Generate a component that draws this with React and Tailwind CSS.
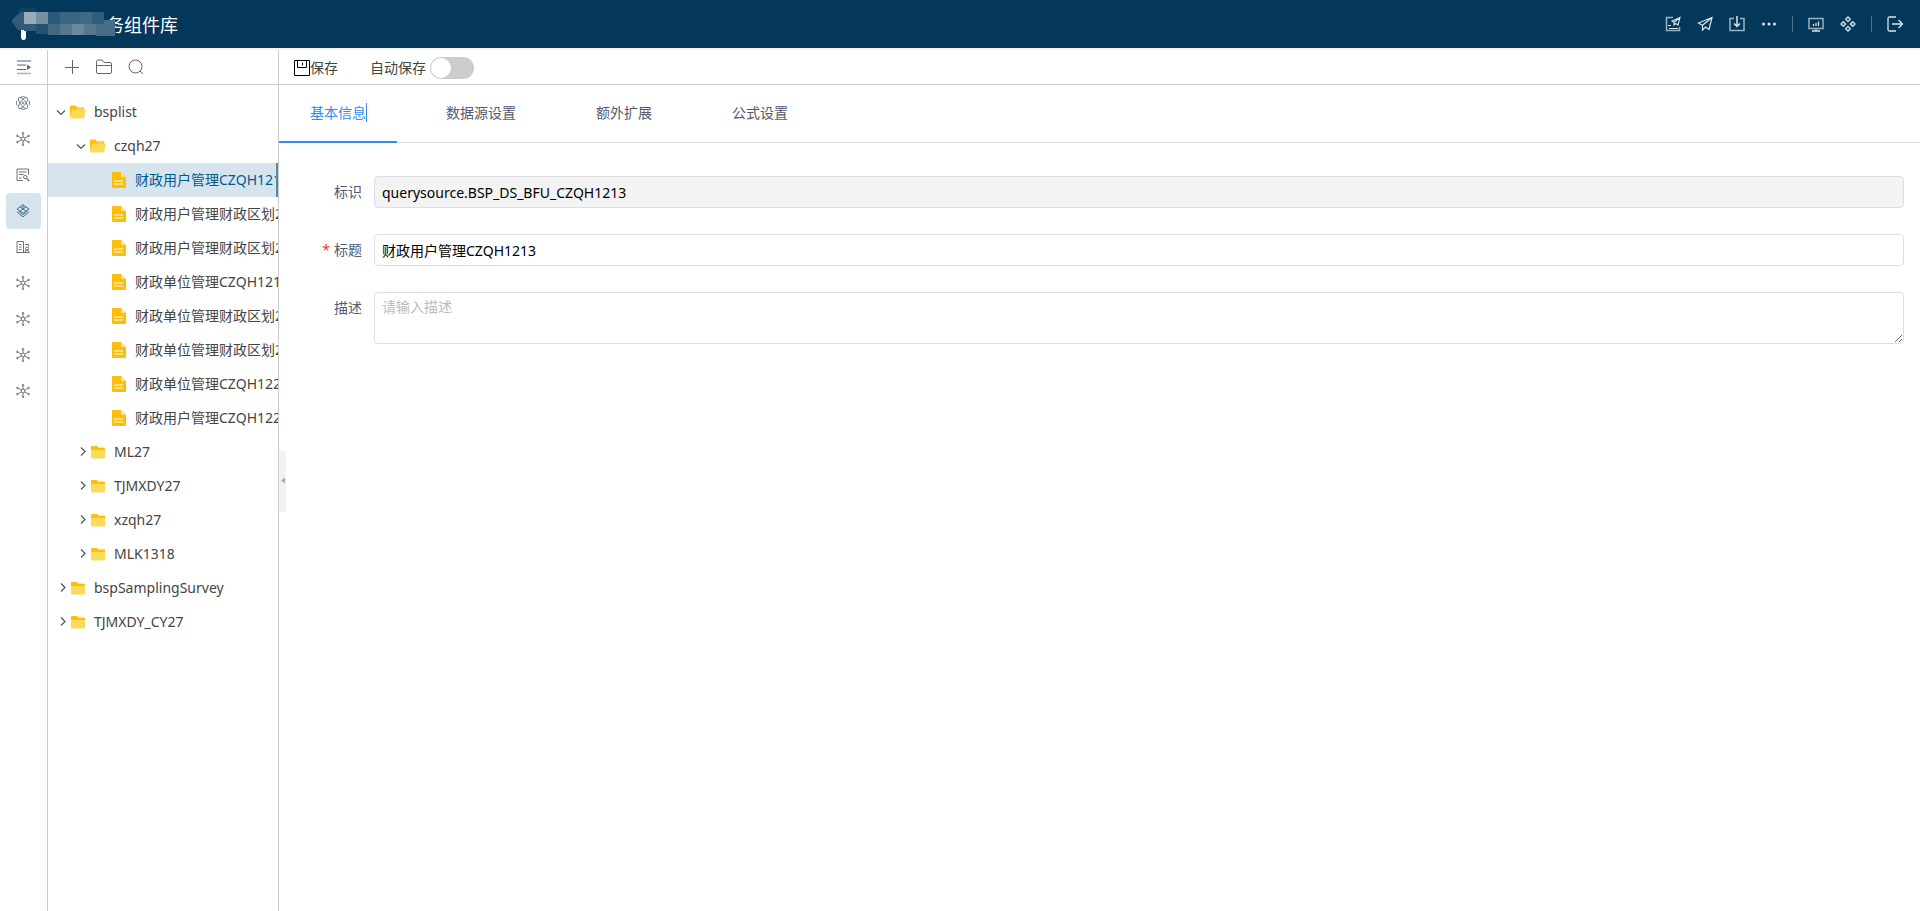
import { useState } from 'react';

const FILES = [
  '财政用户管理CZQH1213',
  '财政用户管理财政区划27',
  '财政用户管理财政区划2701',
  '财政单位管理CZQH1213',
  '财政单位管理财政区划27',
  '财政单位管理财政区划2701',
  '财政单位管理CZQH1227',
  '财政用户管理CZQH1227',
];

const TREE = [
  {
    name: 'bsplist',
    open: true,
    children: [
      { name: 'czqh27', open: true, files: FILES },
      { name: 'ML27' },
      { name: 'TJMXDY27' },
      { name: 'xzqh27' },
      { name: 'MLK1318' },
    ],
  },
  { name: 'bspSamplingSurvey' },
  { name: 'TJMXDY_CY27' },
];

const TABS = ['基本信息', '数据源设置', '额外扩展', '公式设置'];

function Icon({ children, className = 'w-4 h-4', box = '0 0 16 16', width = 1 }) {
  return (
    <svg viewBox={box} className={className} fill="none" stroke="currentColor" strokeWidth={width} aria-hidden="true">
      {children}
    </svg>
  );
}

function HubIcon() {
  return (
    <Icon className="w-[14px] h-[14px]" box="0 0 14 14" width={0.9}>
      <circle cx="7" cy="7" r="1.9" />
      <circle cx="7" cy="1.2" r="0.8" />
      <circle cx="7" cy="12.8" r="0.8" />
      <circle cx="1.4" cy="3.9" r="0.8" />
      <circle cx="12.6" cy="3.9" r="0.8" />
      <circle cx="1.4" cy="10.1" r="0.8" />
      <circle cx="12.6" cy="10.1" r="0.8" />
      <path d="M7 2v3M7 9v3M2.1 4.3l3.2 1.8M11.9 4.3L8.7 6.1M2.1 9.7l3.2-1.8M11.9 9.7L8.7 7.9" />
    </Icon>
  );
}

function AtomIcon() {
  return (
    <Icon className="w-[14px] h-[14px]" box="0 0 14 14" width={0.8}>
      <path d="M4.500 1.200a6.300 6.300 0 0 1 5 0M4.500 12.800a6.300 6.300 0 0 0 5 0M1 4.500a6 6 0 0 0 0 5M13 4.500a6 6 0 0 1 0 5" />
      <ellipse cx="7" cy="7" rx="2.6" ry="6.8" transform="rotate(38 7 7)" />
      <ellipse cx="7" cy="7" rx="2.6" ry="6.8" transform="rotate(-38 7 7)" />
      <circle cx="7" cy="7" r="0.9" />
    </Icon>
  );
}

function FormIcon() {
  return (
    <Icon className="w-[14px] h-[14px]" box="0 0 14 14" width={0.9}>
      <path d="M7 12.5H1V1h11.500v6M3 4h7.500M3 6.500h4.500M3 10h2.500" />
      <circle cx="9.200" cy="9" r="1.700" />
      <path d="M10.500 10.300l2.800 2.800" strokeWidth="1.300" />
    </Icon>
  );
}

function LayersIcon() {
  return (
    <Icon className="w-[14px] h-[14px]" box="0 0 14 14" width={0.9}>
      <path d="M7 .8l6 4.200-6 4.200L1 5z" />
      <path d="M4 2.900l6 4.200M10 2.900L4 7.100M7 .8v4.200" />
      <path d="M.8 7.800L7 12.900l6.200-5.100M2.500 7.200L7 10.800l4.500-3.600" />
    </Icon>
  );
}

function ReportIcon() {
  return (
    <Icon className="w-[14px] h-[14px]" box="0 0 14 14" width={0.9}>
      <path d="M.5 12.500h13M1 12.500v-11h6.500v11M3 4.500h2.500M3 7h2.500M3 9.500h2.500M9 4.500h3.500v2" />
      <circle cx="11" cy="8.500" r="1.500" />
      <path d="M9 12.500q0-2.200 2-2.200t2 2.200" />
    </Icon>
  );
}

const RAIL = [
  ['模型', AtomIcon],
  ['服务', HubIcon],
  ['表单', FormIcon],
  ['数据源', LayersIcon],
  ['报表', ReportIcon],
  ['扩展一', HubIcon],
  ['扩展二', HubIcon],
  ['扩展三', HubIcon],
  ['扩展四', HubIcon],
];

function Chevron({ open }) {
  return (
    <Icon className="w-[10px] h-[10px] shrink-0 text-[#555]" box="0 0 10 10" width={1.2}>
      <path d={open ? 'M1 3.5l4 4 4-4' : 'M5 .5l4 4-4 4'} />
    </Icon>
  );
}

function Folder({ open }) {
  return open ? (
    <svg viewBox="0 0 16 14" className="w-4 h-[14px] shrink-0" aria-hidden="true">
      <path d="M0 12V1.5Q0 .5 1 .5h4.500l1.500 1.500h6.500q.7 0 .7.8V5H2.500z" fill="#ffbe0a" />
      <path d="M6.500 2.500h7v1h-6.500z" fill="#fdeeb0" />
      <path d="M3 4.500h12.500q.6 0 .4.700l-1.700 7.500q-.2.800-1 .8H1q-.9 0-.7-.900L2 5.300q.2-.8 1-.8z" fill="#f8dc58" />
    </svg>
  ) : (
    <svg viewBox="0 0 16 14" className="w-4 h-[14px] shrink-0" aria-hidden="true">
      <path d="M1 5V1.800Q1 1 1.800 1h5.200l1.500 1.500H14q1 0 1 1V5z" fill="#ffbe0a" />
      <path d="M8 1.500h6.500v1H9z" fill="#fdeeb0" />
      <path d="M1 5h14v7.700q0 .8-.8.8H1.800q-.8 0-.8-.8z" fill="#f8dc58" />
    </svg>
  );
}

function FileIcon() {
  return (
    <svg viewBox="0 0 14 16" className="w-[14px] h-4 shrink-0" aria-hidden="true">
      <path d="M1 0h8l5 5v10q0 1-1 1H1q-1 0-1-1V1q0-1 1-1z" fill="#fdbd0b" />
      <path d="M9 0l5 5h-4q-1 0-1-1z" fill="#fde28a" />
      <path d="M2 9h9M2 12h9" stroke="#fff" strokeWidth="1.2" />
    </svg>
  );
}

function FolderRow({ node, child }) {
  return (
    <button
      aria-expanded={!!node.open}
      className={`flex items-center w-full h-[34px] gap-1 text-[#444] ${child ? 'pl-7' : 'pl-2'}`}
    >
      <Chevron open={node.open} />
      <Folder open={node.open} />
      <span className="pl-1 whitespace-nowrap">{node.name}</span>
    </button>
  );
}

function Tree({ selected, onSelect }) {
  return (
    <nav className="pt-[10px] overflow-hidden">
      {TREE.map((root) => (
        <div key={root.name}>
          <FolderRow node={root} />
          {root.children?.map((node) => (
            <div key={node.name}>
              <FolderRow node={node} child />
              {node.files?.map((file, i) => (
                <button
                  key={file}
                  onClick={() => onSelect(i)}
                  className={`flex items-center w-full h-[34px] pl-16 gap-[9px] overflow-hidden ${
                    selected === i ? 'bg-[#d6e4ed] text-[#005a92] border-r-2 border-[#5b87a3]' : 'text-[#444]'
                  }`}
                >
                  <FileIcon />
                  <span className="flex-1 overflow-hidden text-left whitespace-nowrap">{file}</span>
                </button>
              ))}
            </div>
          ))}
        </div>
      ))}
    </nav>
  );
}

function Logo() {
  return (
    <svg viewBox="0 0 104 32" className="absolute left-3 top-2 w-[104px] h-8" aria-hidden="true">
      <path d="M9 20h5v9q0 3-2.500 3T9 29z" fill="#fff" />
      <path d="M0 12L8 4h4v18H6L0 14z" fill="#315b78" />
      <path d="M4 4l4-4h16v4z" fill="#113f60" />
      <path d="M12 4h12v12H12z" fill="#97abb9" />
      <path d="M24 4h12v12H24z" fill="#7590a3" />
      <path d="M36 4h12v12H36z" fill="#2b5876" />
      <path d="M48 4h20v12H48z" fill="#3b647f" />
      <path d="M68 4h12v12H68z" fill="#416983" />
      <path d="M80 4h12v12H80z" fill="#2f5c79" />
      <path d="M12 16h12v7H12z" fill="#315b78" />
      <path d="M24 16h12v10H24z" fill="#24526f" />
      <path d="M36 16h12v11H36z" fill="#416983" />
      <path d="M48 16h12v11H48z" fill="#55788f" />
      <path d="M60 16h12v11H60z" fill="#6b899d" />
      <path d="M72 16h12v11H72z" fill="#55788f" />
      <path d="M84 16h8v-4h11v16H84z" fill="#476e88" />
    </svg>
  );
}

function Header() {
  return (
    <header className="relative flex items-center justify-between h-12 pl-[106px] pr-[17px] bg-[#04385a] text-white">
      <h1 className="pt-0.5 text-lg">务组件库</h1>
      <Logo />
      <div className="flex items-center gap-4 text-[#dbe5ec]">
        <button aria-label="表单发布">
          <Icon width={1.1}>
            <path d="M8 1.5H1.500v13h13V11" stroke="#9db2c0" strokeWidth="1.500" />
            <path d="M3 9.500h3M4 12.500h9M15 1.500L7 5l2 1.300V9l1.600-1.600L13 9zM9 6.300l6-4.800" />
          </Icon>
        </button>
        <button aria-label="发送">
          <Icon width={1.2}>
            <path d="M15 1.500L1.500 7l4 2.300V14l3-3 3.500 2.500zM5.500 9.300L15 1.500" />
          </Icon>
        </button>
        <button aria-label="下载">
          <Icon width={1.5}>
            <path d="M5 2.500H1v12h14v-12h-4" stroke="#9db2c0" />
            <path d="M8 0v10M5 7.500l3 3 3-3" />
          </Icon>
        </button>
        <button aria-label="更多">
          <Icon>
            <path d="M2.500 8h.01M8 8h.01M13.500 8h.01" strokeWidth="3" strokeLinecap="round" />
          </Icon>
        </button>
        <span className="w-px h-4 -mx-px bg-[#4f748c]" />
        <button aria-label="监控">
          <Icon width={1.3}>
            <path d="M1 2.500h14v10H1zM8 12.500v2" stroke="#9db2c0" strokeWidth="1.500" />
            <path d="M4 15h8M5.500 8v2M8 7v3M10.500 5.500V10" />
          </Icon>
        </button>
        <button aria-label="组件">
          <Icon width={1.3}>
            <path d="M8 1l2.300 2.300L8 5.600 5.700 3.300zM8 10.400l2.300 2.300L8 15l-2.300-2.300zM3.300 5.700L5.600 8l-2.300 2.300L1 8zM12.700 5.700L15 8l-2.300 2.300L10.400 8z" />
          </Icon>
        </button>
        <span className="w-px h-4 -mx-px bg-[#4f748c]" />
        <button aria-label="退出">
          <Icon width={1.3}>
            <path d="M9 1H2.500Q1 1 1 2.500v11Q1 15 2.500 15H9M5 8h10.500M11.500 4l4 4-4 4" />
          </Icon>
        </button>
      </div>
    </header>
  );
}

function Field({ id, label, required, children }) {
  return (
    <div className="flex items-start">
      <label htmlFor={id} className="w-[95px] shrink-0 pr-3 text-right leading-8 text-[#515a6e]">
        {required && <span className="mr-1 text-[#ed4014]">*</span>}
        {label}
      </label>
      {children}
    </div>
  );
}

export default function App() {
  const [selected, setSelected] = useState(0);
  const [tab, setTab] = useState(0);
  const [title, setTitle] = useState(FILES[0]);
  const [autoSave, setAutoSave] = useState(false);

  return (
    <div className="flex flex-col min-h-screen bg-white text-sm font-['Noto_Sans','Noto_Sans_CJK_SC',sans-serif]">
      <Header />
      <div className="flex flex-1 border-t-2 border-[#f0f2f4]">
        <aside className="w-12 shrink-0 border-r border-[#ccc] text-[#5c6470]">
          <button aria-label="展开菜单" className="flex items-center justify-center w-full h-[35px] border-b border-[#ccc] text-[#5b6785]">
            <Icon width={1.1}>
              <path d="M1 2h14M1 6h9M1 10.500h9" />
              <path d="M1 14.500h14" stroke="#adb3c2" strokeWidth="1.500" />
              <path d="M11 5.500l4 2.700-4 2.700z" fill="currentColor" stroke="none" />
            </Icon>
          </button>
          <div className="flex flex-col items-center pr-px">
            {RAIL.map(([name, Glyph], i) => (
              <button
                key={name}
                aria-label={name}
                className={`flex items-center justify-center w-[35px] h-9 rounded ${i === 3 ? 'bg-[#d6e4ed] text-[#3d6683]' : ''}`}
              >
                <Glyph />
              </button>
            ))}
          </div>
        </aside>

        <aside className="w-[231px] shrink-0 border-r border-[#ccc]">
          <div className="flex items-center h-[35px] pl-4 gap-4 border-b border-[#ccc] text-[#666]">
            <button aria-label="新增">
              <Icon><path d="M8.500 1v14M1 8.500h14" /></Icon>
            </button>
            <button aria-label="新建文件夹">
              <Icon>
                <path d="M.5 13V2.500q0-1.500 1.500-1.500h4l2 2.500h6q1.500 0 1.500 1.500v8q0 1.500-1.500 1.500H2Q.5 14.500.5 13zM.5 6.500h15" />
              </Icon>
            </button>
            <button aria-label="搜索">
              <Icon><circle cx="7.500" cy="7.500" r="6.500" /><path d="M12 12l3 3" /></Icon>
            </button>
          </div>
          <Tree selected={selected} onSelect={setSelected} />
        </aside>

        <main className="relative flex-1 min-w-0">
          <button
            aria-label="收起"
            className="absolute left-0 top-1/2 -translate-y-1/2 flex items-center justify-center w-[7px] h-[61px] bg-[#f2f2f2] text-[#aaa]"
          >
            <svg viewBox="0 0 4 6" className="w-1 h-[6px]" fill="currentColor"><path d="M4 0v6L0 3z" /></svg>
          </button>

          <div className="flex items-center h-[35px] pt-0.5 pl-[15px] border-b border-[#ccc] text-[#444]">
            <button className="flex items-center">
              <span className="text-black">
                <Icon><path d="M.5 .5h15v15H.5zM3.500 .5v7h9v-7M8.500 2.500v3" /></Icon>
              </span>
              保存
            </button>
            <label htmlFor="auto-save" className="pl-8 pr-1">自动保存</label>
            <input
              id="auto-save"
              type="checkbox"
              role="switch"
              checked={autoSave}
              onChange={(e) => setAutoSave(e.target.checked)}
              className="appearance-none relative w-11 h-[22px] rounded-full bg-[#ccc] checked:bg-[#2d8cf0] before:absolute before:left-px before:top-px before:size-5 before:rounded-full before:bg-white checked:before:left-[23px]"
            />
          </div>

          <div role="tablist" className="flex h-[58px] gap-[18px] border-b border-[#dcdee2]">
            {TABS.map((name, i) => (
              <button
                key={name}
                role="tab"
                aria-selected={tab === i}
                onClick={() => setTab(i)}
                className={`-mb-px px-[31px] border-b-2 ${tab === i ? 'border-[#2d8cf0] text-[#2d8cf0]' : 'border-transparent text-[#515a6e]'}`}
              >
                <span className={tab === i ? '-mr-px border-r border-[#2d8cf0]' : ''}>{name}</span>
              </button>
            ))}
          </div>

          <form className="flex flex-col gap-[26px] pt-[33px] pr-4">
            <Field id="code" label="标识">
              <input
                id="code"
                readOnly
                value="querysource.BSP_DS_BFU_CZQH1213"
                className="flex-1 h-8 px-[7px] rounded border border-[#dcdee2] bg-[#f3f3f3] text-black"
              />
            </Field>
            <Field id="title" label="标题" required>
              <input
                id="title"
                value={title}
                onChange={(e) => setTitle(e.target.value)}
                className="flex-1 h-8 px-[7px] rounded border border-[#dcdee2] text-black"
              />
            </Field>
            <Field id="desc" label="描述">
              <textarea
                id="desc"
                placeholder="请输入描述"
                className="flex-1 h-[52px] px-[7px] py-1 rounded border border-[#dcdee2] placeholder:text-[#bbb] resize-y"
              />
            </Field>
          </form>
        </main>
      </div>
    </div>
  );
}
